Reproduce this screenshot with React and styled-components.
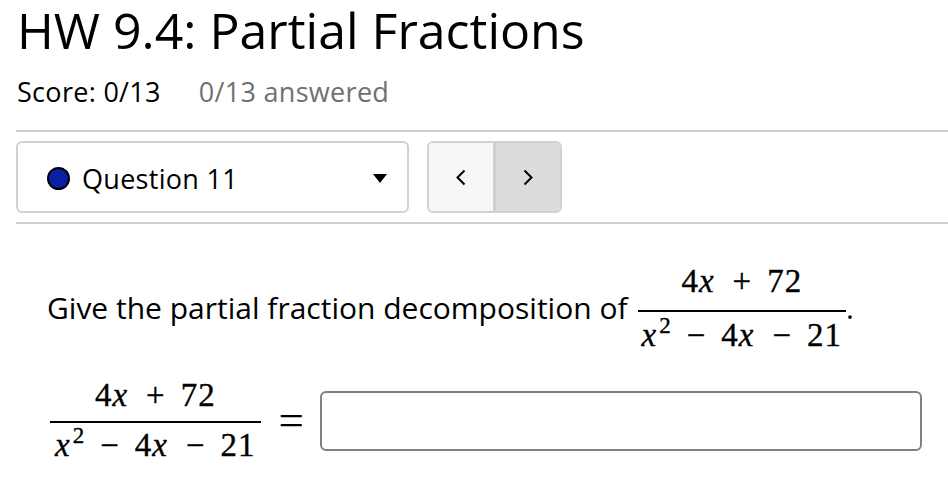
import React from 'react';
import styled, { createGlobalStyle } from 'styled-components';

const GlobalStyle = createGlobalStyle`
  html, body {
    margin: 0;
    padding: 0;
    background: #fff;
  }
  body {
    font-family: 'Open Sans', 'Noto Sans', sans-serif;
    color: #000;
  }
`;

const Page = styled.div`
  width: 948px;
  height: 492px;
  overflow: hidden;
  padding-left: 16px;
  box-sizing: border-box;
`;

const Title = styled.h1`
  margin: 0;
  font-size: 50px;
  font-weight: 400;
  line-height: 60px;
  padding-left: 1px;
`;

const ScoreRow = styled.div`
  display: flex;
  gap: 38px;
  margin-top: 14px;
  font-size: 27px;
  line-height: 36px;
  letter-spacing: 0.3px;
  padding-left: 1px;
`;

const Muted = styled.span`
  color: #707070;
`;

const Rule = styled.hr`
  border: 0;
  height: 2px;
  background: #d0d0d0;
  margin: ${(p) => p.$top}px -20px 0 0;
`;

const NavRow = styled.div`
  display: flex;
  gap: 18px;
  margin-top: 9px;
  height: 72px;
`;

const Select = styled.div`
  width: 393px;
  box-sizing: border-box;
  border: 2px solid #d2d2d2;
  border-radius: 6px;
  display: flex;
  align-items: center;
  padding: 2px 20px 0 29px;
  font-size: 27px;
  letter-spacing: 0.3px;
`;

const Dot = styled.span`
  width: 23px;
  height: 23px;
  box-sizing: border-box;
  border-radius: 50%;
  border: 2px solid #000;
  background: #0a1fa3;
  margin-right: 12px;
  flex-shrink: 0;
`;

const Label = styled.span`
  flex: 1;
  margin-top: 0;
`;

const Caret = styled.span`
  width: 0;
  height: 0;
  border-left: 7px solid transparent;
  border-right: 7px solid transparent;
  border-top: 9px solid #000;
`;

const Pager = styled.div`
  display: flex;
  width: 135px;
  box-sizing: border-box;
  border: 2px solid #d2d2d2;
  border-radius: 6px;
  overflow: hidden;
`;

const PageButton = styled.button`
  flex: 1;
  border: 0;
  padding: 0;
  margin: 0;
  display: flex;
  align-items: center;
  justify-content: center;
  background: ${(p) => (p.$active ? '#dcdcdc' : '#f7f7f7')};
  & + & {
    border-left: 3px solid #cfcfcf;
  }
`;

const Question = styled.div`
  padding-left: 31px;
  margin-top: 41px;
`;

const QuestionLine = styled.div`
  display: flex;
  align-items: center;
  font-size: 30px;
  line-height: 32px;
`;

const Prompt = styled.span`
  margin-right: 10px;
`;

const Frac = styled.span`
  display: inline-flex;
  flex-direction: column;
  align-items: center;
  font-family: 'Liberation Serif', 'Times New Roman', serif;
  font-size: 33px;
  line-height: 32px;
  letter-spacing: 1px;
  -webkit-text-stroke: 0.35px #000;
`;

const Part = styled.span`
  display: flex;
  align-items: baseline;
  white-space: nowrap;
  height: 32px;
`;

const Bar = styled.span`
  align-self: stretch;
  height: 2px;
  background: #000;
  margin: ${(p) => p.$above}px 0 ${(p) => p.$below}px;
`;

const Mi = styled.i`
  font-style: italic;
  padding-right: 3px;
`;

const Op = styled.span`
  margin: 0 15px;
`;

const Sup = styled.span`
  font-size: 23px;
  position: relative;
  top: -13px;
  margin-left: -1px;
`;

const Den = styled(Part)`
  padding: 0 ${(p) => p.$pad}px;
`;

const AnswerLine = styled.div`
  display: flex;
  align-items: center;
  margin-top: 28px;
  padding-left: 3px;
`;

const Equals = styled.span`
  font-family: 'Liberation Serif', 'Times New Roman', serif;
  font-size: 45px;
  line-height: 32px;
  margin: 0 16px 0 18px;
`;

const AnswerBox = styled.input`
  width: 602px;
  height: 60px;
  box-sizing: border-box;
  border: 2px solid #808080;
  border-radius: 6px;
  margin-top: 2px;
  font-size: 20px;
  padding: 0 10px;
`;

const Chevron = ({ dir }) => (
  <svg width="12" height="17" viewBox="0 0 12 17" fill="none">
    <path
      d={dir === 'left' ? 'M9.5 1.5 L2.5 8.5 L9.5 15.5' : 'M2.5 1.5 L9.5 8.5 L2.5 15.5'}
      stroke="#000"
      strokeWidth="2"
    />
  </svg>
);

const Fraction = ({ above, below, pad }) => (
  <Frac>
    <Part>
      4<Mi>x</Mi>
      <Op>+</Op>
      72
    </Part>
    <Bar $above={above} $below={below} />
    <Den $pad={pad}>
      <Mi>x</Mi>
      <Sup>2</Sup>
      <Op>−</Op>4<Mi>x</Mi>
      <Op>−</Op>21
    </Den>
  </Frac>
);

export default function App() {
  return (
    <>
      <GlobalStyle />
      <Page>
        <Title>HW 9.4: Partial Fractions</Title>
        <ScoreRow>
          <span>Score: 0/13</span>
          <Muted>0/13 answered</Muted>
        </ScoreRow>
        <Rule $top={20} />
        <NavRow>
          <Select>
            <Dot />
            <Label>Question 11</Label>
            <Caret />
          </Select>
          <Pager>
            <PageButton aria-label="Previous question">
              <Chevron dir="left" />
            </PageButton>
            <PageButton $active aria-label="Next question">
              <Chevron dir="right" />
            </PageButton>
          </Pager>
        </NavRow>
        <Rule $top={9} />
        <Question>
          <QuestionLine>
            <Prompt>Give the partial fraction decomposition of</Prompt>
            <Fraction above={13} below={7} pad={4} />
            <span>.</span>
          </QuestionLine>
          <AnswerLine>
            <Fraction above={10} below={6} pad={5} />
            <Equals>=</Equals>
            <AnswerBox type="text" />
          </AnswerLine>
        </Question>
      </Page>
    </>
  );
}
